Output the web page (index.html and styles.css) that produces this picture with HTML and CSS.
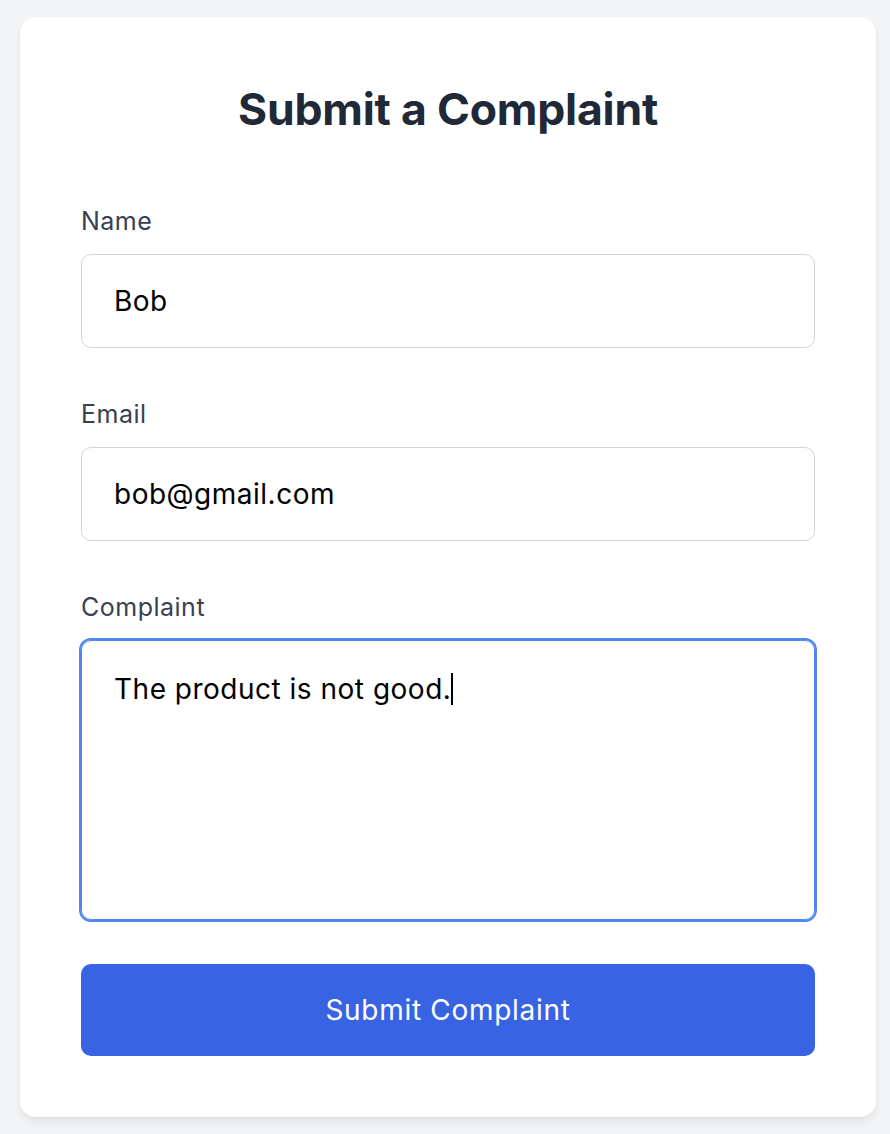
FILE: index.html
```html
<!DOCTYPE html>
<html lang="en">
<head>
<meta charset="utf-8">
<title>Submit a Complaint</title>
<link rel="stylesheet" href="styles.css">
</head>
<body>
<main class="card">
  <h1 class="title">Submit a Complaint</h1>
  <form class="form">
    <div class="field">
      <label class="label" for="name">Name</label>
      <input class="input" id="name" type="text" value="Bob">
    </div>
    <div class="field">
      <label class="label" for="email">Email</label>
      <input class="input" id="email" type="email" value="bob@gmail.com">
    </div>
    <div class="field field-last">
      <label class="label">Complaint</label>
      <div class="textarea" role="textbox" aria-multiline="true">The product is not good.<span class="caret"></span></div>
    </div>
    <button class="button" type="button">Submit Complaint</button>
  </form>
</main>
</body>
</html>
```
FILE: styles.css
```css
* { box-sizing: border-box; }
html, body { margin: 0; padding: 0; }
body {
  background: #f3f4f6;
  font-family: Inter, "Noto Sans", "Liberation Sans", sans-serif;
  height: 1134px;
}
.card {
  margin: 17px 14px 0 20px;
  width: 856px;
  background: #ffffff;
  border-radius: 16px;
  padding: 61px;
  box-shadow: 0 6px 12px -2px rgba(0,0,0,0.08), 0 3px 6px -3px rgba(0,0,0,0.06);
}
.title {
  margin: 0 0 63px;
  font-size: 44.5px;
  line-height: 62px;
  font-weight: 700;
  color: #1f2937;
  text-align: center;
  letter-spacing: -0.2px;
}
.form {
  display: flex;
  flex-direction: column;
}
.field {
  display: flex;
  flex-direction: column;
  gap: 15px;
  margin-bottom: 48px;
}
.field-last { margin-bottom: 44px; }
.label {
  font-size: 25px;
  line-height: 36px;
  font-weight: 400;
  letter-spacing: 0.5px;
  color: #374151;
}
.input {
  height: 94px;
  width: 100%;
  border: 1px solid #d1d5db;
  border-radius: 10px;
  padding: 0 32px;
  font-family: Inter, "Noto Sans", "Liberation Sans", sans-serif;
  font-size: 28px;
  letter-spacing: 0.5px;
  color: #000;
  background: #fff;
  outline: none;
}
.textarea {
  height: 280px;
  border: 1px solid #4f86f0;
  box-shadow: 0 0 0 2px #4f86f0;
  border-radius: 10px;
  padding: 28px 32px;
  font-size: 28px;
  letter-spacing: 0.5px;
  line-height: 40px;
  color: #000;
}
.caret {
  display: inline-block;
  width: 2px;
  height: 32px;
  background: #000;
  vertical-align: -6px;
  margin-left: 0;
}
.button {
  height: 92px;
  width: 100%;
  border: none;
  border-radius: 10px;
  background: #3864e3;
  color: #fff;
  font-family: Inter, "Noto Sans", "Liberation Sans", sans-serif;
  font-size: 28px;
  letter-spacing: 0.7px;
  font-weight: 400;
}
```
